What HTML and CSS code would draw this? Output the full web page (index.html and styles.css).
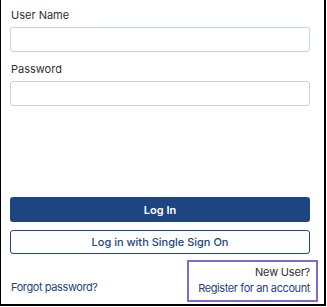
FILE: index.html
```html
<!DOCTYPE html>
<html lang="en">
<head>
    <meta charset="UTF-8">
    <meta name="viewport" content="width=device-width, initial-scale=1.0">
    <title>Log In</title>
    <link rel="stylesheet" href="styles.css">
</head>
<body>
    <div class="frame">
        <form class="login-form">
            <div class="form-group">
                <label for="userName">User Name</label>
                <input type="text" id="userName">
            </div>

            <div class="form-group">
                <label for="password">Password</label>
                <input type="password" id="password">
            </div>

            <div class="actions">
                <button type="submit" class="btn-primary">Log In</button>
                <button type="button" class="btn-outline">Log in with Single Sign On</button>
            </div>

            <div class="links">
                <a href="#" class="link">Forgot password?</a>
                <div class="register">
                    <span class="new-user">New User?</span>
                    <a href="#" class="link">Register for an account</a>
                </div>
            </div>
        </form>
    </div>
</body>
</html>
```

FILE: styles.css
```css
:root {
    --primary-color: #1c4582;
    --text-color: #2f2f33;
    --input-border: #c9d1dd;
    --highlight: #7b6ad8;
    --white: #ffffff;
}

* {
    margin: 0;
    padding: 0;
    box-sizing: border-box;
    font-family: Inter, 'Noto Sans', sans-serif;
}

body {
    background-color: var(--white);
    color: var(--text-color);
}

.frame {
    width: 326px;
    height: 306px;
    border-left: 1px solid #000;
    border-right: 2px solid #000;
    border-bottom: 2px solid #000;
    background-color: var(--white);
}

.login-form {
    padding: 6px 14px 0 9px;
}

.form-group {
    margin-bottom: 8px;
}

label {
    display: block;
    font-size: 11px;
    line-height: 18px;
    color: var(--text-color);
    margin-bottom: 3px;
    padding-left: 1px;
}

input[type="text"],
input[type="password"] {
    display: block;
    width: 100%;
    height: 25px;
    border: 1px solid var(--input-border);
    border-radius: 3px;
    background-color: var(--white);
}

.actions {
    margin-top: 91px;
}

.btn-primary,
.btn-outline {
    display: block;
    width: 100%;
    border-radius: 3px;
    font-size: 11px;
    font-weight: 600;
    cursor: pointer;
}

.btn-primary {
    height: 25px;
    background-color: var(--primary-color);
    color: var(--white);
    border: none;
}

.btn-outline {
    height: 24px;
    margin-top: 8px;
    background-color: var(--white);
    color: var(--primary-color);
    border: 1px solid var(--primary-color);
    font-weight: 500;
}

.links {
    display: flex;
    justify-content: space-between;
    align-items: flex-end;
    margin-top: 6px;
    margin-right: -8px;
}

.link {
    font-size: 11px;
    line-height: 16px;
    letter-spacing: -0.4px;
    color: var(--primary-color);
    text-decoration: none;
    white-space: nowrap;
}

.links > .link {
    padding-left: 1px;
    margin-bottom: 7px;
}

.register {
    display: flex;
    flex-direction: column;
    align-items: flex-end;
    width: 131px;
    padding: 2px 6px 4px 0;
    border: 2px solid var(--highlight);
}

.new-user {
    font-size: 11px;
    line-height: 16px;
    letter-spacing: -0.2px;
    color: var(--text-color);
}
```
